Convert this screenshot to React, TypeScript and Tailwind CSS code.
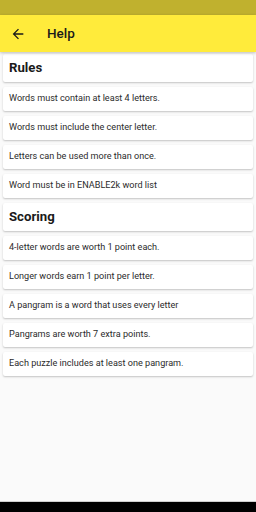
const rules = [
  "Words must contain at least 4 letters.",
  "Words must include the center letter.",
  "Letters can be used more than once.",
  "Word must be in ENABLE2k word list",
];

const scoring = [
  "4-letter words are worth 1 point each.",
  "Longer words earn 1 point per letter.",
  "A pangram is a word that uses every letter",
  "Pangrams are worth 7 extra points.",
  "Each puzzle includes at least one pangram.",
];

function Header({ title }: { title: string }) {
  return (
    <div className="h-[28px] flex items-center px-[6px] bg-white rounded-[2px] shadow-[0_1px_2px_rgba(0,0,0,0.22)]">
      <span className="text-[13.2px] font-bold text-[#1a1a1a]">{title}</span>
    </div>
  );
}

function Item({ text }: { text: string }) {
  return (
    <div className="h-[24px] flex items-center px-[6px] bg-white rounded-[2px] shadow-[0_1px_2px_rgba(0,0,0,0.22)]">
      <span className="text-[9.1px] text-[#2b2b2b]">{text}</span>
    </div>
  );
}

export default function App() {
  return (
    <div className="w-[256px] h-[512px] flex flex-col bg-[#fafafa] font-['Roboto',sans-serif] overflow-hidden">
      <div className="h-[15px] bg-[#c0b12e]" />
      <div className="h-[37px] bg-[#ffeb3b] flex items-center shadow-[0_1px_3px_rgba(0,0,0,0.25)] z-10">
        <svg viewBox="0 0 24 24" className="w-[16px] h-[16px] ml-[10px]" fill="#1a1a1a">
          <path d="M20 11H7.83l5.59-5.59L12 4l-8 8 8 8 1.41-1.41L7.83 13H20v-2z" />
        </svg>
        <span className="ml-[21px] text-[13.5px] font-medium text-[#1a1a1a]">Help</span>
      </div>
      <div className="flex-1 flex flex-col gap-[5px] px-[3px] pt-[2px]">
        <Header title="Rules" />
        {rules.map(r => (
          <Item key={r} text={r} />
        ))}
        <Header title="Scoring" />
        {scoring.map(s => (
          <Item key={s} text={s} />
        ))}
      </div>
      <div className="h-px bg-[#cfcfcf]" />
      <div className="h-[10px] bg-black" />
    </div>
  );
}
